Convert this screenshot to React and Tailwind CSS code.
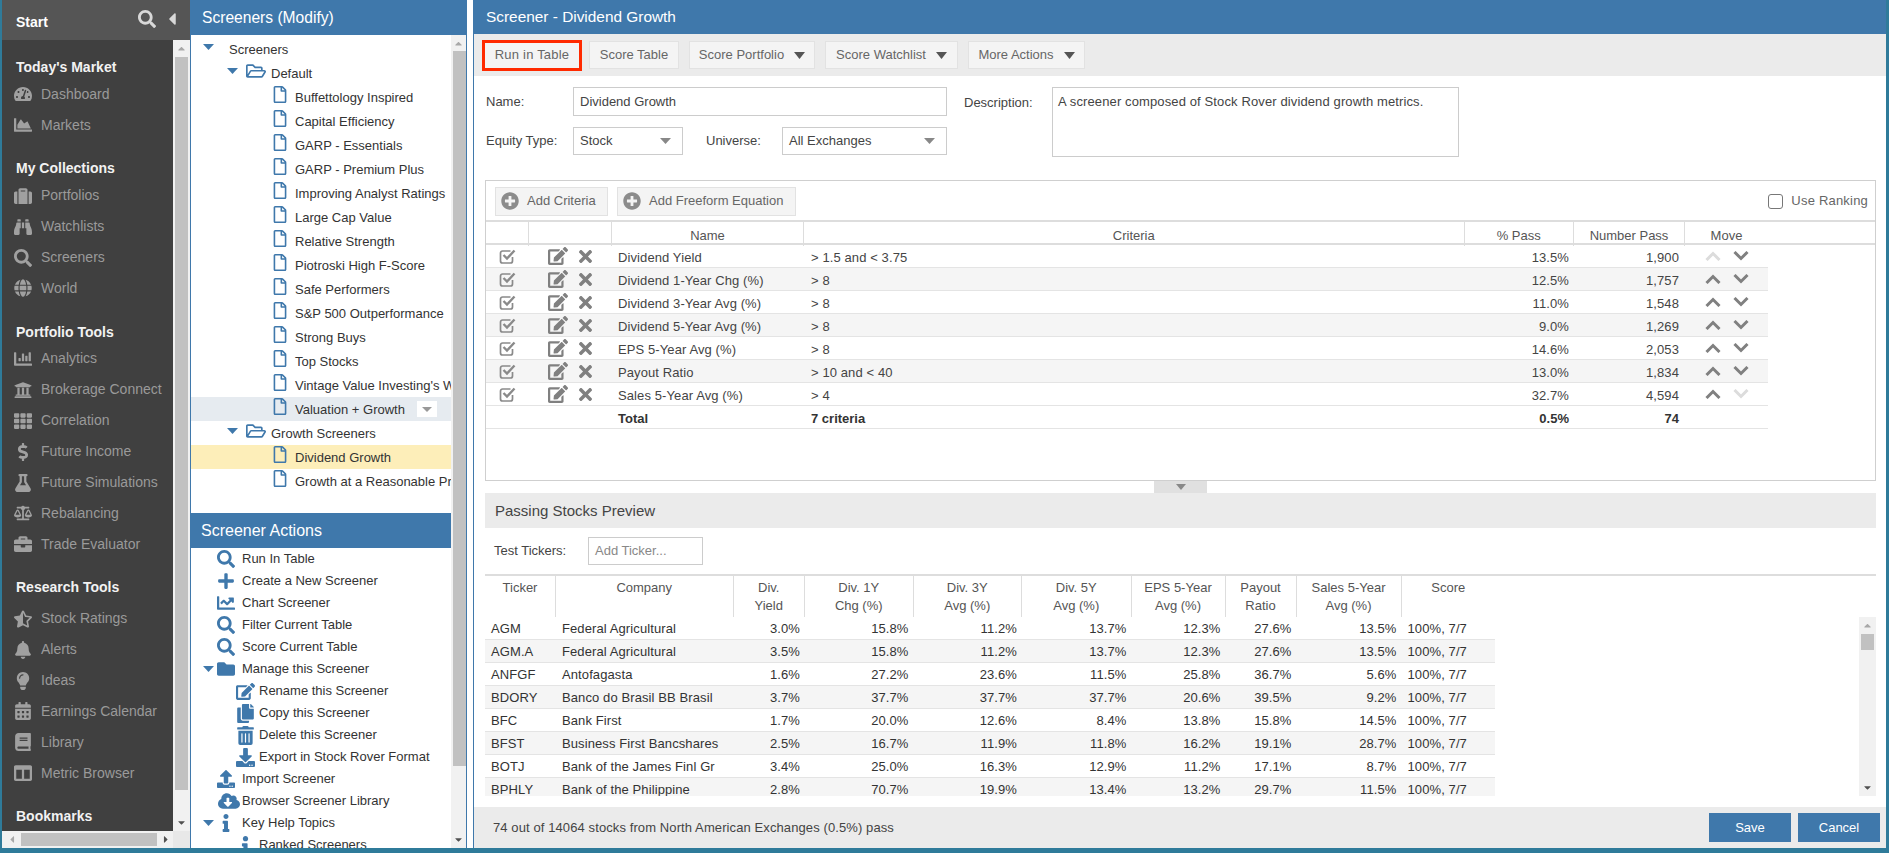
import {
  FaBalanceScale, FaBell, FaBinoculars, FaBook, FaBriefcase, FaCalendarAlt, FaCaretDown, FaCaretLeft, FaCaretRight, FaCaretUp,
  FaChartArea, FaChartBar, FaChartLine, FaCloudDownloadAlt, FaColumns, FaCopy, FaDollarSign, FaDownload, FaEdit, FaFlask, FaFolder,
  FaGlobe, FaInfo, FaLightbulb, FaPlus, FaPlusCircle, FaRegFile, FaRegFolderOpen, FaSearch, FaStarHalfAlt, FaSuitcase, FaTachometerAlt,
  FaTh, FaTimes, FaTrashAlt, FaUniversity, FaUpload,
} from "react-icons/fa";

const navSections = [
  { title: "Today's Market", items: [["Dashboard", FaTachometerAlt], ["Markets", FaChartArea]] },
  { title: "My Collections", items: [["Portfolios", FaSuitcase], ["Watchlists", FaBinoculars], ["Screeners", FaSearch], ["World", FaGlobe]] },
  {
    title: "Portfolio Tools",
    items: [["Analytics", FaChartBar], ["Brokerage Connect", FaUniversity], ["Correlation", FaTh], ["Future Income", FaDollarSign], ["Future Simulations", FaFlask], ["Rebalancing", FaBalanceScale], ["Trade Evaluator", FaBriefcase]],
  },
  {
    title: "Research Tools",
    wide: true,
    items: [["Stock Ratings", FaStarHalfAlt], ["Alerts", FaBell], ["Ideas", FaLightbulb], ["Earnings Calendar", FaCalendarAlt], ["Library", FaBook], ["Metric Browser", FaColumns]],
  },
];

const defaultScreeners = [
  "Buffettology Inspired", "Capital Efficiency", "GARP - Essentials", "GARP - Premium Plus", "Improving Analyst Ratings", "Large Cap Value",
  "Relative Strength", "Piotroski High F-Score", "Safe Performers", "S&P 500 Outperformance", "Strong Buys", "Top Stocks", "Vintage Value Investing's Wonderful",
];

const actions = [
  { label: "Run In Table", icon: FaSearch },
  { label: "Create a New Screener", icon: FaPlus },
  { label: "Chart Screener", icon: FaChartLine },
  { label: "Filter Current Table", icon: FaSearch },
  { label: "Score Current Table", icon: FaSearch },
  { label: "Manage this Screener", icon: FaFolder, caret: true },
  { label: "Rename this Screener", icon: FaEdit, sub: true },
  { label: "Copy this Screener", icon: FaCopy, sub: true },
  { label: "Delete this Screener", icon: FaTrashAlt, sub: true },
  { label: "Export in Stock Rover Format", icon: FaDownload, sub: true },
  { label: "Import Screener", icon: FaUpload },
  { label: "Browser Screener Library", icon: FaCloudDownloadAlt, wide: true },
  { label: "Key Help Topics", icon: FaInfo, caret: true },
  { label: "Ranked Screeners", icon: FaInfo, sub: true },
];

const criteria = [
  ["Dividend Yield", "> 1.5 and < 3.75", "13.5%", "1,900"],
  ["Dividend 1-Year Chg (%)", "> 8", "12.5%", "1,757"],
  ["Dividend 3-Year Avg (%)", "> 8", "11.0%", "1,548"],
  ["Dividend 5-Year Avg (%)", "> 8", "9.0%", "1,269"],
  ["EPS 5-Year Avg (%)", "> 8", "14.6%", "2,053"],
  ["Payout Ratio", "> 10 and < 40", "13.0%", "1,834"],
  ["Sales 5-Year Avg (%)", "> 4", "32.7%", "4,594"],
];

const stocks = [
  ["AGM", "Federal Agricultural", "3.0%", "15.8%", "11.2%", "13.7%", "12.3%", "27.6%", "13.5%"],
  ["AGM.A", "Federal Agricultural", "3.5%", "15.8%", "11.2%", "13.7%", "12.3%", "27.6%", "13.5%"],
  ["ANFGF", "Antofagasta", "1.6%", "27.2%", "23.6%", "11.5%", "25.8%", "36.7%", "5.6%"],
  ["BDORY", "Banco do Brasil BB Brasil", "3.7%", "37.7%", "37.7%", "37.7%", "20.6%", "39.5%", "9.2%"],
  ["BFC", "Bank First", "1.7%", "20.0%", "12.6%", "8.4%", "13.8%", "15.8%", "14.5%"],
  ["BFST", "Business First Bancshares", "2.5%", "16.7%", "11.9%", "11.8%", "16.2%", "19.1%", "28.7%"],
  ["BOTJ", "Bank of the James Finl Gr", "3.4%", "25.0%", "16.3%", "12.9%", "11.2%", "17.1%", "8.7%"],
  ["BPHLY", "Bank of the Philippine", "2.8%", "70.7%", "19.9%", "13.4%", "13.2%", "29.7%", "11.5%"],
];

const previewHead = [
  ["Ticker"], ["Company"], ["Div.", "Yield"], ["Div. 1Y", "Chg (%)"], ["Div. 3Y", "Avg (%)"], ["Div. 5Y", "Avg (%)"],
  ["EPS 5-Year", "Avg (%)"], ["Payout", "Ratio"], ["Sales 5-Year", "Avg (%)"], ["Score"],
];

const previewCols = "grid grid-cols-[71px_177.5px_71.5px_108.5px_108.5px_109.5px_94px_71px_105px_93.5px]";
const criteriaCols = "grid grid-cols-[43px_83px_192px_660.5px_109.5px_111px_83px]";

function Triangle({ className }) {
  return (
    <svg viewBox="0 0 10 6" preserveAspectRatio="none" className={className}>
      <polygon points="0,0 10,0 5,6" fill="currentColor" />
    </svg>
  );
}

function CheckedBox() {
  return (
    <svg viewBox="0 0 17 16" className="h-[16px] w-[17px] text-[#8a8a8a]" fill="none" stroke="currentColor">
      <path d="M13.5 9v4a2 2 0 0 1-2 2h-8a2 2 0 0 1-2-2V5a2 2 0 0 1 2-2h8" strokeWidth="1.7" />
      <path d="M4.5 7l3.5 3.5L15.5 2.5" strokeWidth="2.4" />
    </svg>
  );
}

function Chevron({ up, className }) {
  return (
    <svg viewBox="0 0 16 10" className={className} fill="none" stroke="currentColor" strokeWidth="3">
      <polyline points={up ? "1.5,9 8,2.5 14.5,9" : "1.5,1 8,7.5 14.5,1"} />
    </svg>
  );
}

function SidebarNav() {
  return (
    <div className="flex h-full w-[188px] shrink-0 flex-col">
      <div className="flex h-[40px] shrink-0 items-center bg-[#555555] pl-[14px] pr-[8.5px]">
        <span className="pt-[4px] text-[14px] font-bold text-white">Start</span>
        <FaSearch className="mb-[3px] ml-auto text-[18px] text-[#d8d8d8]" />
        <FaCaretLeft className="mb-[3px] ml-[5.5px] text-[20px] text-[#d8d8d8]" />
      </div>
      <div className="flex min-h-0 flex-1">
        <div className="w-[171px] overflow-hidden bg-[#404040] pt-[16px]">
          {navSections.map((section) => (
            <div key={section.title} className="mb-[16.6px]">
              <div className={section.wide ? "mb-[4px] flex h-[23px] items-center pl-[14px] text-[14px] font-bold text-[#f2f2f2]" : "flex h-[23px] items-center pl-[14px] text-[14px] font-bold text-[#f2f2f2]"}>
                {section.title}
              </div>
              {section.items.map(([label, Icon]) => (
                <div key={label} className="flex h-[30.9px] items-center text-[14px] text-[#9a9a9a]">
                  <span className="flex w-[39px] shrink-0 justify-center pl-[3px]">
                    <Icon className="text-[18px] text-[#a0a0a0]" />
                  </span>
                  {label}
                </div>
              ))}
            </div>
          ))}
          <div className="flex h-[23px] items-center pl-[14px] text-[14px] font-bold text-[#f2f2f2]">Bookmarks</div>
        </div>
        <div className="flex w-[17px] flex-col items-center bg-[#f1f1f1]">
          <div className="flex h-[17px] w-full shrink-0 items-center justify-center">
            <FaCaretUp className="text-[11px] text-[#a8a8a8]" />
          </div>
          <div className="h-[733px] w-[13px] shrink-0 bg-[#c1c1c1]" />
          <div className="mt-auto flex h-[17px] w-full shrink-0 items-center justify-center">
            <FaCaretDown className="text-[11px] text-[#505050]" />
          </div>
        </div>
      </div>
      <div className="flex h-[17px] shrink-0">
        <div className="flex w-[171px] items-center bg-[#f1f1f1]">
          <FaCaretLeft className="ml-[5px] w-[10px] shrink-0 text-[11px] text-[#a8a8a8]" />
          <div className="ml-[4px] h-[13px] w-[136px] bg-[#c1c1c1]" />
          <FaCaretRight className="ml-[4px] w-[10px] shrink-0 text-[11px] text-[#505050]" />
        </div>
        <div className="w-[17px] bg-[#e8e8e8]" />
      </div>
    </div>
  );
}

function TreeLeaf({ label, className }) {
  return (
    <div className={`flex h-[24px] items-center whitespace-nowrap pl-[82px] text-[13px] text-[#333333] ${className || ""}`}>
      <FaRegFile className="mb-[5px] mr-[8px] w-[14px] shrink-0 text-[17px] text-[#3f78ab]" />
      <span className="pt-[1px]">{label}</span>
    </div>
  );
}

function TreeFolder({ label }) {
  return (
    <div className="flex h-[24px] items-center pl-[36px] text-[13px] text-[#333333]">
      <Triangle className="mb-[4px] mr-[8px] h-[6px] w-[11px] shrink-0 text-[#3f78ab]" />
      <FaRegFolderOpen className="mb-[5px] mr-[5px] text-[20px] text-[#3f78ab]" />
      <span className="pt-[1px]">{label}</span>
    </div>
  );
}

function ScreenersPanel() {
  return (
    <div className="flex h-full w-[277px] shrink-0 flex-col border-x border-[#3f78ab] bg-white">
      <div className="flex h-[35px] shrink-0 items-center bg-[#3f78ab] pl-[11px] text-[15.6px] text-white">Screeners (Modify)</div>
      <div className="flex min-h-0 flex-1">
        <div className="flex w-[260px] flex-col overflow-hidden">
          <div className="h-[478px] shrink-0 pt-[2px]">
            <div className="flex h-[24px] items-center pl-[12px] text-[13px] text-[#333333]">
              <Triangle className="mb-[5px] mr-[15px] h-[6px] w-[11px] shrink-0 text-[#3f78ab]" />
              <span className="pt-[1px]">Screeners</span>
            </div>
            <TreeFolder label="Default" />
            {defaultScreeners.map((name) => (
              <TreeLeaf key={name} label={name} />
            ))}
            <div className="flex h-[24px] items-center whitespace-nowrap bg-[#e6ebf0] pl-[82px] text-[13px] text-[#333333]">
              <FaRegFile className="mb-[5px] mr-[8px] w-[14px] shrink-0 text-[17px] text-[#3f78ab]" />
              <span className="pt-[1px]">Valuation + Growth</span>
              <span className="ml-[12px] flex h-[16px] w-[20px] items-center justify-center bg-white">
                <Triangle className="h-[5px] w-[10px] text-[#999999]" />
              </span>
            </div>
            <TreeFolder label="Growth Screeners" />
            <TreeLeaf label="Dividend Growth" className="bg-[#fdeeb9]" />
            <TreeLeaf label="Growth at a Reasonable Price" />
          </div>
          <div className="flex h-[35px] shrink-0 items-center bg-[#3f78ab] pl-[10px] text-[16px] text-white">Screener Actions</div>
          {actions.map((action) => (
            <div
              key={action.label}
              className={action.sub ? "flex h-[22px] shrink-0 items-center whitespace-nowrap pl-[44px] text-[13px] text-[#333333]" : "flex h-[22px] shrink-0 items-center whitespace-nowrap pl-[12px] text-[13px] text-[#333333]"}
            >
              {!action.sub && (
                <span className="w-[14px] shrink-0">{action.caret && <Triangle className="h-[6px] w-[11px] text-[#3f78ab]" />}</span>
              )}
              <span className={action.sub ? "mr-[4px] flex w-[20px] shrink-0 justify-center" : action.wide ? "mr-[1px] flex w-[24px] shrink-0 justify-center" : "mr-[7px] flex w-[18px] shrink-0 justify-center"}>
                <action.icon className={action.wide ? "text-[22px] text-[#3f78ab]" : action.sub ? "text-[19px] text-[#3f78ab]" : "text-[18px] text-[#3f78ab]"} />
              </span>
              {action.label}
            </div>
          ))}
        </div>
        <div className="flex w-[15px] flex-col bg-[#f1f1f1]">
          <div className="flex h-[16px] shrink-0 items-center justify-center">
            <FaCaretUp className="text-[11px] text-[#a8a8a8]" />
          </div>
          <div className="ml-[2px] h-[715px] w-[13px] shrink-0 bg-[#c1c1c1]" />
          <div className="mt-auto flex h-[17px] shrink-0 items-center justify-center">
            <FaCaretDown className="text-[11px] text-[#505050]" />
          </div>
        </div>
      </div>
    </div>
  );
}

function ToolButton({ label, caret, className }) {
  return (
    <div className={`flex h-[28px] items-center justify-center gap-[10px] border border-[#e2e2e2] bg-[#f4f4f4] text-[13px] text-[#666666] ${className}`}>
      {label}
      {caret && <Triangle className="h-[7px] w-[11px] text-[#555555]" />}
    </div>
  );
}

function SelectBox({ label, className }) {
  return (
    <div className={`flex h-[28px] items-center justify-between border border-[#cccccc] pl-[6px] pr-[11px] text-[13px] text-[#444444] ${className}`}>
      {label}
      <Triangle className="h-[6px] w-[11px] text-[#888888]" />
    </div>
  );
}

function CriteriaTable() {
  return (
    <div className="flex h-[301px] shrink-0 flex-col border border-[#cfcfcf]">
      <div className="flex h-[41px] shrink-0 items-center border-b-2 border-[#dddddd] pl-[9px] pr-[7px] pt-[1px] text-[13px] text-[#666666]">
        <div className="flex h-[29px] w-[113px] items-center gap-[8px] border border-[#e2e2e2] bg-[#f4f4f4] pl-[5px]">
          <FaPlusCircle className="text-[18px] text-[#8c8c8c]" />
          Add Criteria
        </div>
        <div className="ml-[9px] flex h-[29px] w-[179px] items-center gap-[8px] border border-[#e2e2e2] bg-[#f4f4f4] pl-[5px]">
          <FaPlusCircle className="text-[18px] text-[#8c8c8c]" />
          Add Freeform Equation
        </div>
        <div className="ml-auto flex items-center gap-[8px] tracking-[0.2px]">
          <span className="h-[15px] w-[15px] rounded-[3px] border border-[#777777] bg-white" />
          Use Ranking
        </div>
      </div>
      <div className={`${criteriaCols} h-[23px] shrink-0 border-b-2 border-[#dddddd] text-[13px] leading-[21px] text-[#555555]`}>
        <div className="border-r border-[#dddddd]" />
        <div className="border-r border-[#dddddd]" />
        <div className="border-r border-[#dddddd] pt-[3px] text-center">Name</div>
        <div className="border-r border-[#dddddd] pt-[3px] text-center">Criteria</div>
        <div className="border-r border-[#dddddd] pt-[3px] text-center">% Pass</div>
        <div className="border-r border-[#dddddd] pt-[3px] text-center">Number Pass</div>
        <div className="pt-[3px] text-center">Move</div>
      </div>
      {criteria.map((row, i) => (
        <div key={row[0]} className={i % 2 === 1 ? `${criteriaCols} h-[23px] w-[1282px] shrink-0 items-center border-b border-[#e4e4e4] bg-[#f5f5f5] text-[13px] tracking-[0.1px] text-[#444444]` : `${criteriaCols} h-[23px] w-[1282px] shrink-0 items-center border-b border-[#e4e4e4] text-[13px] tracking-[0.1px] text-[#444444]`}>
          <div className="flex justify-center">
            <CheckedBox />
          </div>
          <div className="flex items-center pl-[19px]">
            <FaEdit className="text-[20px] text-[#808080]" />
            <span className="ml-[11px] flex h-[15px] w-[13px] items-center justify-center">
              <FaTimes className="shrink-0 text-[19px] text-[#808080]" />
            </span>
          </div>
          <div className="pl-[6px] pt-[4px] leading-[16px]">{row[0]}</div>
          <div className="pl-[7px] pt-[4px] leading-[16px]">{row[1]}</div>
          <div className="pr-[5px] pt-[4px] text-right leading-[16px]">{row[2]}</div>
          <div className="pr-[6px] pt-[4px] text-right leading-[16px]">{row[3]}</div>
          <div className="flex items-center pl-[20px]">
            <Chevron up className={i === 0 ? "h-[10px] w-[16px] text-[#dcdcdc]" : "h-[10px] w-[16px] text-[#808080]"} />
            <Chevron className={i === 6 ? "ml-[12px] h-[10px] w-[16px] text-[#dcdcdc]" : "ml-[12px] h-[10px] w-[16px] text-[#808080]"} />
          </div>
        </div>
      ))}
      <div className={`${criteriaCols} h-[23px] w-[1282px] shrink-0 items-center border-b border-[#e4e4e4] text-[13px] font-bold text-[#333333]`}>
        <div />
        <div />
        <div className="pl-[6px] pt-[4px] leading-[16px]">Total</div>
        <div className="pl-[7px] pt-[4px] leading-[16px]">7 criteria</div>
        <div className="pr-[5px] pt-[4px] text-right leading-[16px]">0.5%</div>
        <div className="pr-[6px] pt-[4px] text-right leading-[16px]">74</div>
        <div />
      </div>
    </div>
  );
}

function PreviewTable() {
  return (
    <div className="h-[222px] shrink-0 border-t-2 border-[#dddddd]">
      <div className={`${previewCols} h-[41px] text-center text-[13px] leading-[18px] text-[#555555]`}>
        {previewHead.map((lines) => (
          <div key={lines[0]} className="border-r border-[#dddddd] pt-[3px] last:border-r-0">
            {lines.map((line) => (
              <div key={line}>{line}</div>
            ))}
          </div>
        ))}
      </div>
      <div className="flex h-[179px] overflow-hidden">
        <div className="w-[1010px] shrink-0">
          {stocks.map((row, i) => (
            <div key={row[0]} className={i % 2 === 1 ? `${previewCols} h-[23px] items-center border-b border-[#e4e4e4] bg-[#f5f5f5] pt-[2px] text-[13px] tracking-[0.1px] text-[#333333]` : `${previewCols} h-[23px] items-center border-b border-[#e4e4e4] pt-[2px] text-[13px] tracking-[0.1px] text-[#333333]`}>
              <div className="pl-[6px]">{row[0]}</div>
              <div className="pl-[6px]">{row[1]}</div>
              {row.slice(2).map((cell, j) => (
                <div key={j} className="pr-[5px] text-right">{cell}</div>
              ))}
              <div className="pl-[6px]">100%, 7/7</div>
            </div>
          ))}
        </div>
        <div className="ml-auto flex w-[17px] flex-col bg-[#f1f1f1]">
          <div className="flex h-[17px] shrink-0 items-center justify-center">
            <FaCaretUp className="text-[11px] text-[#a8a8a8]" />
          </div>
          <div className="mx-[2px] h-[16px] shrink-0 bg-[#c1c1c1]" />
          <div className="mt-auto flex h-[17px] shrink-0 items-center justify-center">
            <FaCaretDown className="text-[11px] text-[#505050]" />
          </div>
        </div>
      </div>
    </div>
  );
}

function ScreenerEditor() {
  return (
    <div className="flex h-full min-w-0 flex-1 flex-col border-l border-[#3f78ab] bg-white">
      <div className="flex h-[34px] shrink-0 items-center bg-[#3f78ab] pl-[12px] text-[15.4px] text-white">Screener - Dividend Growth</div>
      <div className="flex h-[42px] shrink-0 items-center bg-[#ebebeb] pl-[8px]">
        <div className="flex h-[31px] w-[100px] items-center justify-center border-[3px] border-[#ff2a00] bg-[#f4f4f4] text-[13px] tracking-[0.2px] text-[#666666]">Run in Table</div>
        <ToolButton label="Score Table" className="ml-[7px] w-[90px]" />
        <ToolButton label="Score Portfolio" caret className="ml-[10px] w-[126px]" />
        <ToolButton label="Score Watchlist" caret className="ml-[10px] w-[133px]" />
        <ToolButton label="More Actions" caret className="ml-[10px] w-[117px]" />
      </div>
      <div className="flex h-[104px] shrink-0 pl-[12px] pt-[11px] text-[13px] text-[#444444]">
        <div className="w-[461px]">
          <div className="flex items-center">
            <span className="w-[87px]">Name:</span>
            <div className="flex h-[29px] flex-1 items-center border border-[#cccccc] pl-[6px]">Dividend Growth</div>
          </div>
          <div className="mt-[11px] flex items-center">
            <span className="w-[87px]">Equity Type:</span>
            <SelectBox label="Stock" className="w-[110px]" />
            <span className="ml-[23px] w-[76px]">Universe:</span>
            <SelectBox label="All Exchanges" className="w-[165px]" />
          </div>
        </div>
        <span className="ml-[17px] w-[88px] pt-[6px]">Description:</span>
        <div className="h-[70px] w-[407px] border border-[#cccccc] pl-[5px] pt-[4px] tracking-[0.12px]">A screener composed of Stock Rover dividend growth metrics.</div>
      </div>
      <div className="flex min-h-0 flex-1 flex-col pl-[11px] pr-[10px]">
        <CriteriaTable />
        <div className="flex h-[12px] shrink-0 justify-center">
          <div className="flex w-[53px] items-center justify-center bg-[#e0e0e0]">
            <Triangle className="h-[6px] w-[10px] text-[#888888]" />
          </div>
        </div>
        <div className="flex h-[35px] shrink-0 items-center bg-[#ebebeb] pl-[10px] pt-[2px] text-[15px] text-[#444444]">Passing Stocks Preview</div>
        <div className="flex h-[46px] shrink-0 items-start pl-[9px] pt-[9px] text-[13px] text-[#444444]">
          <span className="w-[94px] leading-[28px]">Test Tickers:</span>
          <div className="flex h-[28px] w-[115px] items-center border border-[#cccccc] pl-[6px] text-[#888888]">Add Ticker...</div>
        </div>
        <PreviewTable />
        <div className="h-[11px] shrink-0" />
      </div>
      <div className="flex h-[41px] shrink-0 items-center bg-[#ebebeb] pl-[19px] pr-[6px] text-[13px] text-[#444444]">
        <span className="tracking-[0.1px]">74 out of 14064 stocks from North American Exchanges (0.5%) pass</span>
        <div className="ml-auto flex h-[29px] w-[82px] items-center justify-center bg-[#3f78ab] text-white">Save</div>
        <div className="ml-[7px] flex h-[29px] w-[82px] items-center justify-center bg-[#3f78ab] text-white">Cancel</div>
      </div>
    </div>
  );
}

export default function App() {
  return (
    <div className="flex h-[853px] w-[1889px] overflow-hidden bg-[#2f7b9a] pb-[5px] pl-[2px] pr-[3px] font-['Liberation_Sans',Arial,sans-serif]">
      <SidebarNav />
      <ScreenersPanel />
      <div className="h-full w-[6px] shrink-0 bg-white" />
      <ScreenerEditor />
    </div>
  );
}
